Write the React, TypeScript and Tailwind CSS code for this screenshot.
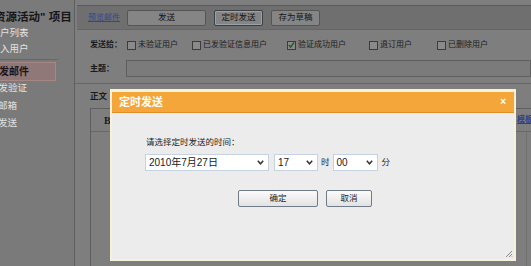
import type { ReactNode } from "react"

const SANS = "font-['Liberation_Sans','Noto_Sans_CJK_SC',sans-serif]"

function Check({ on, label, w }: { on?: boolean; label: string; w: string }) {
  return (
    <div className={`flex items-center ${w}`}>
      <span className="w-[9px] h-[9px] border border-[#3c3c3c] bg-[#8a8a8a] flex items-center justify-center shrink-0">
        {on && (
          <svg width="8" height="8" viewBox="0 0 8 8">
            <path d="M1 4 L3 6.5 L7 1" fill="none" stroke="#1d5a1d" strokeWidth="1.6" />
          </svg>
        )}
      </span>
      <span className="ml-[2px] text-[8px] text-[#1c1c1c] whitespace-nowrap">{label}</span>
    </div>
  )
}

function ToolBtn({ children, w, active }: { children: ReactNode; w: string; active?: boolean }) {
  return (
    <div
      className={`h-[16px] ${w} rounded-[2px] bg-[#858585] flex items-center justify-center text-[8.5px] text-[#141414] ${
        active ? "border border-[#3a4048] shadow-[inset_0_0_0_1px_#9aa2aa]" : "border border-[#555555]"
      }`}
    >
      {children}
    </div>
  )
}

function Select({ value, w }: { value: string; w: string }) {
  return (
    <div className={`h-[17px] ${w} bg-white border border-[#c4d2e2] flex items-center pl-[3px] pr-[4px]`}>
      <span className="flex-1 text-[10px] text-[#1a1a1a] whitespace-nowrap">{value}</span>
      <svg width="7" height="5" viewBox="0 0 7 5">
        <path d="M0.8 0.8 L3.5 3.8 L6.2 0.8" fill="none" stroke="#333" strokeWidth="1.5" />
      </svg>
    </div>
  )
}

function DlgBtn({ children, w }: { children: ReactNode; w: string }) {
  return (
    <div
      className={`h-[17px] ${w} rounded-[2px] border border-[#6f7c88] bg-gradient-to-b from-[#fbfbfb] to-[#e2e2e2] flex items-center justify-center text-[8.5px] text-[#1a1a1a]`}
    >
      {children}
    </div>
  )
}

export default function App() {
  return (
    <div className={`relative w-[531px] h-[266px] overflow-hidden flex bg-[#7e7e7e] ${SANS}`}>
      {/* sidebar */}
      <aside className="w-[75px] shrink-0 border-r border-[#5f5f5f] bg-[#7a7a7a] flex flex-col overflow-hidden">
        <div className="mt-[11px] h-[13px] leading-[13px] ml-[-6px] text-[11.5px] font-bold text-[#161616] whitespace-nowrap">
          资源活动" 项目
        </div>
        <div className="mt-[1px] h-[16px] leading-[16px] ml-[-9.5px] text-[9.5px] text-[#e2e2e2] whitespace-nowrap">用户列表</div>
        <div className="h-[16px] leading-[16px] ml-[-9.5px] text-[9.5px] text-[#e2e2e2] whitespace-nowrap">导入用户</div>
        <div className="mt-[2px] w-[58px] border-t border-[#686868]" />
        <div className="mt-[2px] h-[19px] w-[56px] bg-[#917878] border border-[#a78686] border-l-0 flex items-center">
          <span className="ml-[-11px] text-[10px] font-bold text-[#1e1414] whitespace-nowrap">群发邮件</span>
        </div>
        <div className="h-[13px] leading-[13px] ml-[-11px] text-[9.5px] text-[#e2e2e2] whitespace-nowrap">群发验证</div>
        <div className="mt-[5px] h-[13px] leading-[13px] ml-[-21px] text-[9.5px] text-[#e2e2e2] whitespace-nowrap">测试邮箱</div>
        <div className="mt-[4px] h-[13px] leading-[13px] ml-[-21px] text-[9.5px] text-[#e2e2e2] whitespace-nowrap">定时发送</div>
      </aside>

      {/* main */}
      <main className="flex-1 flex flex-col min-w-0">
        <div className="h-[5px]" />
        <div className="ml-[2px] h-[25px] bg-[#6f6f6f] border-t border-[#5a5a5a] border-b border-b-[#666666] flex items-center pl-[11px]">
          <span className="w-[32px] text-[8px] text-[#33478c] underline whitespace-nowrap">预览邮件</span>
          <div className="ml-[7px] flex items-center gap-[8px]">
            <ToolBtn w="w-[79px]">发送</ToolBtn>
            <ToolBtn w="w-[49px]" active>
              定时发送
            </ToolBtn>
            <ToolBtn w="w-[49px]">存为草稿</ToolBtn>
          </div>
        </div>

        <div className="h-[30px] flex items-center pl-[15px]">
          <span className="w-[37px] text-[8px] font-bold text-[#1a1a1a] whitespace-nowrap">发送给：</span>
          <Check label="未验证用户" w="w-[65px]" />
          <Check label="已发验证信息用户" w="w-[95px]" />
          <Check label="验证成功用户" w="w-[82px]" on />
          <Check label="退订用户" w="w-[68px]" />
          <Check label="已删除用户" w="w-[60px]" />
        </div>

        <div className="h-[24px] flex pl-[15px] border-b border-[#676767]">
          <span className="w-[36px] mt-[3px] text-[8px] font-bold text-[#1a1a1a] whitespace-nowrap">主题：</span>
          <div className="flex-1 h-[17px] border border-[#5e5e5e] bg-[#7b7b7b]" />
        </div>

        <div className="h-[24px] flex items-center pl-[15px]">
          <span className="text-[8.5px] font-bold text-[#1a1a1a]">正文</span>
        </div>

        <div className="ml-[15px] flex-1 border-l border-t border-[#5e5e5e] flex flex-col">
          <div className="h-[23px] border-b border-[#686868] flex items-center pl-[13px]">
            <span className="font-['Liberation_Serif',serif] text-[10px] font-bold text-[#1a1a1a]">B</span>
            <span className="ml-auto mr-[-2px] text-[8px] font-bold text-[#2c418a] underline whitespace-nowrap">模板</span>
          </div>
          <div className="flex-1 flex">
            <div className="flex-1" />
            <div className="w-[5px] border-l border-[#727272]" />
          </div>
        </div>
      </main>

      {/* dialog */}
      <div className="absolute left-[110px] top-[89px] w-[406px] h-[172px] bg-[#ececec] border-[2px] border-t-[3px] border-[#f7f1d8] flex flex-col">
        <div className="h-[21px] bg-[#f5a63b] border-b border-[#df8e26] flex items-center pl-[7px] pr-[8px]">
          <span className="text-[11px] font-bold text-white">定时发送</span>
          <span className="ml-auto text-[10px] font-bold text-white leading-none">×</span>
        </div>
        <div className="flex-1 flex flex-col pl-[33px] pt-[23px] relative">
          <span className="ml-[1px] h-[12px] leading-[12px] text-[8.5px] text-[#1c1c1c]">请选择定时发送的时间：</span>
          <div className="mt-[6px] flex items-center">
            <Select value="2010年7月27日" w="w-[124px]" />
            <div className="ml-[5px]">
              <Select value="17" w="w-[44px]" />
            </div>
            <span className="mx-[3px] text-[8.5px] text-[#1c1c1c]">时</span>
            <Select value="00" w="w-[45px]" />
            <span className="ml-[4px] text-[8.5px] text-[#1c1c1c]">分</span>
          </div>
          <div className="mt-[19px] pl-[93px] flex gap-[8px]">
            <DlgBtn w="w-[80px]">确定</DlgBtn>
            <DlgBtn w="w-[46px]">取消</DlgBtn>
          </div>
          <svg className="absolute right-[1px] bottom-[1px]" width="8" height="8" viewBox="0 0 8 8">
            <path d="M7 1 L1 7 M7 4 L4 7 M7 6.5 L6.5 7" stroke="#8a8a8a" strokeWidth="1" />
          </svg>
        </div>
      </div>
    </div>
  )
}
